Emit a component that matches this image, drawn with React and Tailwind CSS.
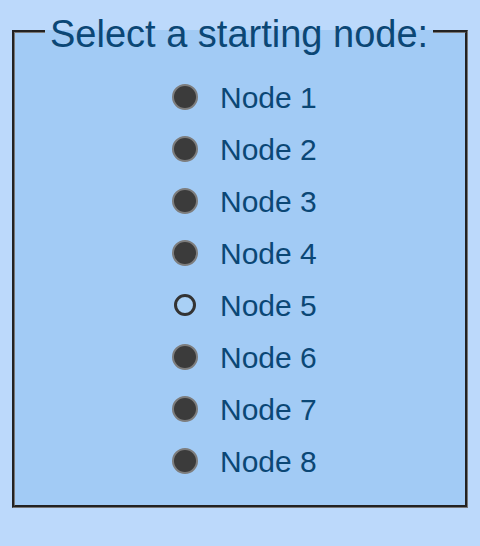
import { useState } from "react";

const nodes = [1, 2, 3, 4, 5, 6, 7, 8];

const Radio = ({ checked }) =>
  checked ? (
    <span className="w-[22px] h-[22px] rounded-full border-[3px] border-[#333] bg-[#a9d0f5] mx-[2px]" />
  ) : (
    <span className="w-[26px] h-[26px] rounded-full border-2 border-[#7d7d7d] bg-[#3b3b3b]" />
  );

export default function App() {
  const [selected, setSelected] = useState(5);

  return (
    <div
      className="min-h-[546px] bg-[#bcd9fb] pt-[8px] pb-10"
      style={{ fontFamily: '"Liberation Sans", Arial, sans-serif' }}
    >
      <fieldset className="mx-3 border-[3px] [border-style:groove] border-[#777] bg-[#a2cbf5] px-0 pb-[18px] pt-[17px]">
        <legend className="ml-[30px] px-[5px] pt-[6px] text-[38px] leading-[40px] text-[#0b4775]">
          Select a starting node:
        </legend>
        <div className="flex flex-col pl-[157px]">
          {nodes.map((n) => (
            <label
              key={n}
              onClick={() => setSelected(n)}
              className="flex items-center h-[52px] cursor-pointer"
            >
              <Radio checked={selected === n} />
              <span className="ml-[22px] text-[30px] text-[#0b4775]">Node {n}</span>
            </label>
          ))}
        </div>
      </fieldset>
    </div>
  );
}
